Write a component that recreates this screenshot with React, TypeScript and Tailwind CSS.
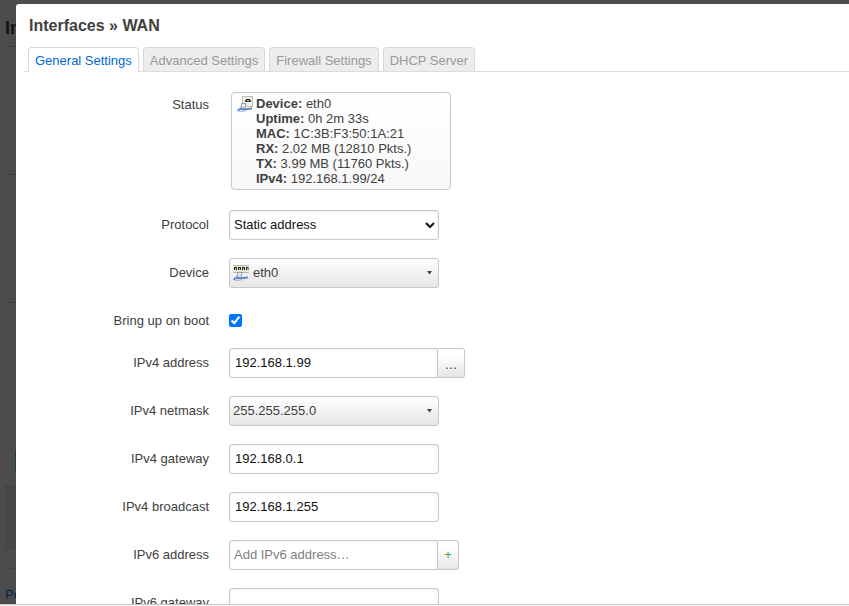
import type { ReactNode } from 'react';

const fieldClass =
  'h-[30px] rounded-[3px] border border-[#c8c8c8] text-[13px] text-[#111] shadow-[inset_0_1px_3px_rgba(0,0,0,0.08)] outline-none placeholder:text-[#808080]';
const dropdownClass =
  'h-[30px] w-[210px] appearance-none rounded-[3px] border border-[#c8c8c8] bg-linear-to-b from-white to-[#e6e6e6] text-[13px] text-[#404040] outline-none';
const addonClass =
  'h-[30px] rounded-r-[3px] border border-l-0 border-[#c8c8c8] bg-linear-to-b from-white from-25% to-[#e6e6e6] text-[13px]';

function Row({ label, htmlFor, compact, children }: { label: string; htmlFor?: string; compact?: boolean; children: ReactNode }) {
  return (
    <div className={`flex items-start gap-5 ${compact ? 'h-6' : ''}`}>
      <label htmlFor={htmlFor} className="w-[185px] shrink-0 text-right leading-[29px]">
        {label}
      </label>
      {children}
    </div>
  );
}

function Caret() {
  return (
    <svg className="pointer-events-none absolute top-[13px] right-[7px]" width="5" height="4" viewBox="0 0 5 4" aria-hidden="true">
      <path d="M0 0h5L2.5 3.5z" fill="#404040" />
    </svg>
  );
}

function Cable() {
  return (
    <>
      <path d="M4.500 7.500l4.500 0-1 4-3.500 1z" fill="#eceef0" stroke="#8f959b" strokeWidth="0.9" />
      <path d="M3 10.500l2 2.500" stroke="#9aa0a6" strokeWidth="1" />
      <path d="M0.800 14.800c1.200-2.300 3-1.800 5-1.500 3 .4 5.500-1 9.200-.8" fill="none" stroke="#5b8ac6" strokeWidth="2" />
      <path d="M1.500 15.200c3 .4 5 .3 7.500-.7" fill="none" stroke="#8fb2de" strokeWidth="1" />
    </>
  );
}

function PortIcon() {
  return (
    <svg width="16" height="16" viewBox="0 0 16 16" aria-hidden="true">
      <rect x="5.5" y="0.5" width="10" height="10" fill="#f1f1ed" stroke="#bdbdb9" />
      <rect x="9" y="3" width="4" height="3" fill="#222" />
      <rect x="8" y="4" width="6" height="2" fill="#444" />
      <rect x="10" y="4" width="2" height="1" fill="#cbb94a" />
      <Cable />
    </svg>
  );
}

function SwitchIcon() {
  return (
    <svg width="16" height="16" viewBox="0 0 16 16" aria-hidden="true">
      <rect x="0" y="0" width="16" height="8" fill="#e6e6e0" />
      <path d="M0 0.5h16M0 7.500h16" stroke="#b8b8b3" />
      <path d="M1 2h3v3H1zM5 2h3v3H5zM9 2h3v3H9zM13 2h2.500v3H13z" fill="#2b2b28" />
      <path d="M2 3h1v2H2zM6 3h1v2H6zM10 3h1v2h-1zM14 3h1v2h-1z" fill="#d9bf3e" />
      <Cable />
    </svg>
  );
}

const status = [
  ['Device:', 'eth0'],
  ['Uptime:', '0h 2m 33s'],
  ['MAC:', '1C:3B:F3:50:1A:21'],
  ['RX:', '2.02 MB (12810 Pkts.)'],
  ['TX:', '3.99 MB (11760 Pkts.)'],
  ['IPv4:', '192.168.1.99/24'],
];

const tabs = ['General Settings', 'Advanced Settings', 'Firewall Settings', 'DHCP Server'];

function Backdrop() {
  return (
    <div className="h-full bg-[#4c4c4c]" aria-hidden="true">
      <div className="flex h-full w-4 flex-col overflow-hidden pl-[5px] whitespace-nowrap">
        <div className="h-[47px] shrink-0 border-b border-[#404040] pt-[13px] text-[18px] leading-[30px] font-bold text-[#131313]">In</div>
        <div className="h-32 shrink-0 border-b border-[#404040]" />
        <div className="h-32 shrink-0 border-b border-[#404040]" />
        <div className="h-[184px] shrink-0 border-b border-[#404040] pt-[146px] pl-2.5">
          <div className="h-[25px] w-20 rounded-[3px] bg-[#1c4a1c]" />
        </div>
        <div className="h-[63px] shrink-0 rounded-b-[3px] bg-[#474747]" />
        <div className="h-[19px] shrink-0 border-b border-[#444]" />
        <div className="pt-[17px] text-[13px] leading-[18px] text-[#00274d]">Po</div>
      </div>
    </div>
  );
}

export default function App() {
  return (
    <div className="flex h-screen flex-col overflow-hidden bg-white font-['Liberation_Sans',Arial,sans-serif] text-[13px] text-[#404040]">
      <div className="relative min-h-0 flex-1 overflow-hidden">
        <Backdrop />
        <div role="dialog" aria-labelledby="title" className="absolute top-1 right-0 bottom-0 left-4 overflow-hidden rounded-tl-[3px] bg-white px-2">
          <h4 id="title" className="px-[5px] pt-3 text-[16px] leading-[20px] font-bold">
            Interfaces » WAN
          </h4>
          <div role="tablist" className="-mr-2 mt-[11px] flex gap-1 border-b border-[#dcdcdc] pl-1">
            {tabs.map((t, i) => (
              <button
                key={t}
                role="tab"
                aria-selected={i === 0}
                className={
                  i === 0
                    ? '-mb-px h-[25px] rounded-t-[4px] border border-b-0 border-[#d8d8d8] bg-white px-1.5 pt-0.5 text-[#0069d6]'
                    : 'h-6 rounded-t-[4px] border border-b-0 border-[#d8d8d8] bg-[#ededed] px-1.5 pt-0.5 text-[#999]'
                }
              >
                {t}
              </button>
            ))}
          </div>
          <form className="mt-[18px] flex flex-col gap-[18px]">
            <Row label="Status">
              <div className="mt-0.5 ml-0.5 flex h-[98px] w-[220px] gap-[3px] rounded-[4px] border border-[#c8c8c8] bg-linear-to-b from-white to-[#f8f8f8] pt-[3px] pl-[5px] leading-[15px]">
                <span className="shrink-0">
                  <PortIcon />
                </span>
                <div>
                  {status.map(([k, v]) => (
                    <p key={k}>
                      <b>{k}</b> {v}
                    </p>
                  ))}
                </div>
              </div>
            </Row>
            <div className="mt-0.5 flex flex-col gap-[18px]">
              <Row label="Protocol" htmlFor="protocol">
                <select id="protocol" className={`${fieldClass} w-[210px] bg-white pr-px pb-0.5`}>
                  <option>Static address</option>
                </select>
              </Row>
              <Row label="Device" htmlFor="device">
                <div className="relative">
                  <select id="device" className={`${dropdownClass} pl-[23px]`}>
                    <option>eth0</option>
                  </select>
                  <span className="pointer-events-none absolute top-[7px] left-1">
                    <SwitchIcon />
                  </span>
                  <Caret />
                </div>
              </Row>
              <Row label="Bring up on boot" htmlFor="boot" compact>
                <input id="boot" type="checkbox" defaultChecked className="mt-2 size-[13px]" />
              </Row>
              <Row label="IPv4 address" htmlFor="address">
                <div className="flex">
                  <input id="address" defaultValue="192.168.1.99" className={`${fieldClass} w-[209px] rounded-r-none px-[5px] pb-0.5`} />
                  <button type="button" aria-label="More" className={`${addonClass} w-[27px] pt-1 text-[#404040]`}>
                    …
                  </button>
                </div>
              </Row>
              <Row label="IPv4 netmask" htmlFor="netmask">
                <div className="relative">
                  <select id="netmask" className={`${dropdownClass} pl-[3px]`}>
                    <option>255.255.255.0</option>
                  </select>
                  <Caret />
                </div>
              </Row>
              <Row label="IPv4 gateway" htmlFor="gateway">
                <input id="gateway" defaultValue="192.168.0.1" className={`${fieldClass} w-[210px] px-[5px] pb-0.5`} />
              </Row>
              <Row label="IPv4 broadcast" htmlFor="broadcast">
                <input id="broadcast" defaultValue="192.168.1.255" className={`${fieldClass} w-[210px] px-[5px] pb-0.5`} />
              </Row>
              <Row label="IPv6 address" htmlFor="address6">
                <div className="flex">
                  <input id="address6" placeholder="Add IPv6 address…" className={`${fieldClass} w-[209px] rounded-r-none px-1 pb-0.5`} />
                  <button type="button" aria-label="Add" className={`${addonClass} w-[21px] text-[#46a546]`}>
                    +
                  </button>
                </div>
              </Row>
              <Row label="IPv6 gateway" htmlFor="gateway6">
                <input id="gateway6" className={`${fieldClass} w-[210px] px-[5px] pb-0.5`} />
              </Row>
            </div>
          </form>
        </div>
      </div>
      <div className="h-0.5 shrink-0 border-t border-[#c4c4c4] bg-[#fafafa]" />
    </div>
  );
}
